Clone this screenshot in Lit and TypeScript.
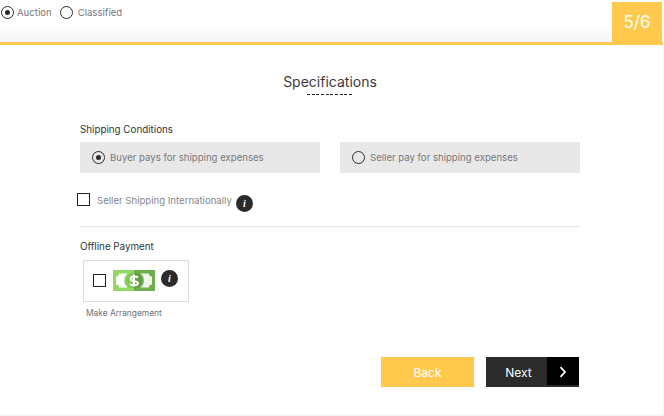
import { LitElement, html, css } from "lit";
import { customElement } from "lit/decorators.js";

const info = html`<span class="info">i</span>`;

@customElement("app-root")
export class AppRoot extends LitElement {
  static styles = css`
    :host {
      display: block;
      width: 664px;
      height: 416px;
      background: #f6f6f6;
      font-family: "Inter", "Liberation Sans", sans-serif;
      color: #6f6f74;
      overflow: hidden;
    }
    .page {
      width: 663px;
      height: 414px;
      background: #fff;
      display: flex;
      flex-direction: column;
    }
    .top {
      flex: none;
      box-sizing: border-box;
      border-bottom: 3px solid #ffc94d;
      height: 45px;
      display: flex;
      justify-content: space-between;
      align-items: flex-start;
      background: linear-gradient(#fff 0, #fff 24px, #f5f5f5 42px);
    }
    .types {
      display: flex;
      align-items: center;
      height: 25px;
      padding-left: 1px;
      font-size: 9.6px;
      color: #77777c;
    }
    .types .r { margin-right: 3px; }
    .types .t { margin-right: 8px; }
    .types .t + .r { margin-right: 5px; }
    .badge {
      width: 50px;
      height: 40px;
      margin: 2px 1px 0 0;
      background: #ffc94d;
      color: #fff;
      font-size: 17px;
      display: flex;
      align-items: center;
      justify-content: center;
    }
    .r {
      width: 13px;
      height: 13px;
      box-sizing: border-box;
      border: 1.7px solid #2b2b2b;
      border-radius: 50%;
      display: flex;
      align-items: center;
      justify-content: center;
      flex: none;
    }
    .r.on::after {
      content: "";
      width: 5.4px;
      height: 5.4px;
      border-radius: 50%;
      background: #2b2b2b;
    }
    h2 {
      margin: 28px 0 0;
      font-weight: 400;
      font-size: 14px;
      line-height: 18px;
      color: #3c3c40;
      text-align: center;
      width: 660px;
    }
    .dash {
      width: 46px;
      height: 1px;
      margin: 3px 0 0 307px;
      background: repeating-linear-gradient(90deg, #222 0, #222 3px, transparent 3px, transparent 4.67px);
    }
    .body {
      margin-left: 80px;
      width: 500px;
    }
    .label {
      font-size: 9.8px;
      line-height: 12px;
      color: #333;
    }
    .ship { margin-top: 29px; }
    .opts {
      display: grid;
      grid-template-columns: 240px 240px;
      gap: 20px;
      margin-top: 6px;
    }
    .opt {
      height: 31px;
      background: #e8e8e8;
      display: flex;
      align-items: center;
      gap: 5px;
      padding-left: 12px;
      font-size: 9.6px;
      color: #77777c;
    }
    .intl {
      display: flex;
      align-items: center;
      margin: 18px 0 0 -3px;
      height: 20px;
      font-size: 9.6px;
      color: #85858a;
    }
    .box {
      width: 13px;
      height: 13px;
      box-sizing: border-box;
      border: 1.5px solid #222;
      background: #fff;
      flex: none;
    }
    .intl .box { margin: -3px 7px 0 0; }
    .intl .tx { margin: -2px 4px 0 0; }
    .intl .info { margin-top: 4px; }
    .info {
      width: 17px;
      height: 17px;
      border-radius: 50%;
      background: #2b2b2b;
      color: #fff;
      font: italic 700 10px/17px "Liberation Serif", serif;
      text-align: center;
      flex: none;
    }
    hr {
      margin: 15px 0 0;
      border: 0;
      border-top: 1px solid #e6e6e6;
    }
    .off { margin-top: 14px; }
    .card {
      width: 106px;
      height: 42px;
      box-sizing: border-box;
      border: 1px solid #dcdcdc;
      margin: 7px 0 0 3px;
      display: flex;
      align-items: center;
      padding-left: 9px;
      background: #fff;
    }
    .card .box { margin: -1px 7px 0 0; }
    .card svg { flex: none; margin: -1px 6px 0 0; }
    .card .info { margin-top: -5px; }
    .make {
      font-size: 8.4px;
      line-height: 10px;
      margin: 6px 0 0 6px;
      color: #6f6f74;
    }
    .actions {
      display: flex;
      justify-content: flex-end;
      gap: 12px;
      margin-top: 39px;
      margin-right: 1px;
    }
    .btn {
      width: 93px;
      height: 30px;
      border: 0;
      padding: 1px 0 0;
      box-sizing: border-box;
      font-family: inherit;
      font-size: 12px;
      color: #fff;
      display: flex;
      align-items: center;
      justify-content: center;
    }
    .back { background: #ffc94d; }
    .next {
      background: #2b2b2b;
      position: relative;
      padding-right: 28px;
    }
    .arrow {
      position: absolute;
      right: 0;
      top: 0;
      width: 32px;
      height: 28px;
      padding-top: 2px;
      box-sizing: border-box;
      background: #000;
      display: flex;
      align-items: center;
      justify-content: center;
    }
  `;

  render() {
    return html`
      <div class="page">
        <div class="top">
          <div class="types">
            <span class="r on"></span><span class="t">Auction</span>
            <span class="r"></span><span class="t">Classified</span>
          </div>
          <div class="badge">5/6</div>
        </div>
        <h2>Specifications</h2>
        <div class="dash"></div>
        <div class="body">
          <div class="label ship">Shipping Conditions</div>
          <div class="opts">
            <div class="opt"><span class="r on"></span>Buyer pays for shipping expenses</div>
            <div class="opt"><span class="r"></span>Seller pay for shipping expenses</div>
          </div>
          <div class="intl">
            <span class="box"></span><span class="tx">Seller Shipping Internationally</span>${info}
          </div>
          <hr />
          <div class="label off">Offline Payment</div>
          <div class="card">
            <span class="box"></span>
            <svg width="42" height="21" viewBox="0 0 42 21">
              <rect width="21" height="21" fill="#93d863" />
              <rect x="21" width="21" height="21" fill="#6fae4c" />
              <path d="M6 3.500h8.500a9 9 0 0 0 0 14H6a3 3 0 0 0-3-3v-8a3 3 0 0 0 3-3z" fill="#fff" />
              <path d="M36 3.500h-8.500a9 9 0 0 1 0 14H36a3 3 0 0 1 3-3v-8a3 3 0 0 1-3-3z" fill="#f1f6ec" />
              <path d="M21 2.500a8 8 0 0 0 0 16z" fill="#80c653" />
              <path d="M21 2.500a8 8 0 0 1 0 16z" fill="#5f9f42" />
              <path d="M25 7.500c-1-1.200-7.200-2-7.400 1.200-.2 3.400 7.800 1.700 7.400 4.700-.4 2.500-6.200 2-8 .7M21 4.500v12" fill="none" stroke="#fff" stroke-width="2" />
            </svg>
            ${info}
          </div>
          <div class="make">Make Arrangement</div>
          <div class="actions">
            <button class="btn back">Back</button>
            <button class="btn next">Next
              <span class="arrow">
                <svg width="10" height="12" viewBox="0 0 10 12"><path d="M2.500 1.200 7 6l-4.500 4.800" fill="none" stroke="#fff" stroke-width="1.700" /></svg>
              </span>
            </button>
          </div>
        </div>
      </div>
    `;
  }
}
